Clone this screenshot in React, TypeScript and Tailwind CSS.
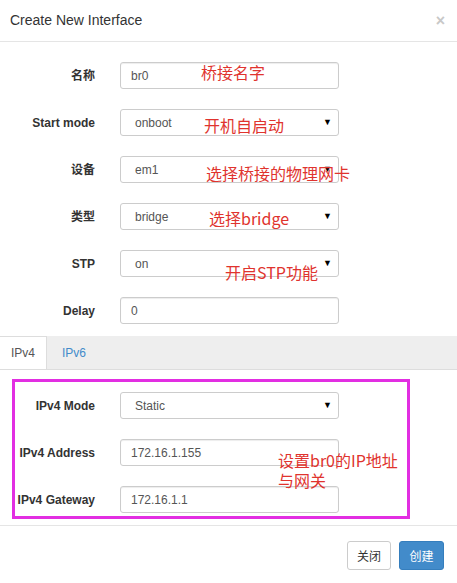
import React from "react";

const font = { fontFamily: '"Liberation Sans", Arial, "Noto Sans CJK SC", sans-serif' };

function Label({ children }: { children: React.ReactNode }) {
  return (
    <div className="w-[95px] text-right text-[12px] font-bold text-[#333]">{children}</div>
  );
}

function TextInput({ value }: { value: string }) {
  return (
    <div className="ml-[25px] flex h-[27px] w-[219px] items-center rounded-[3px] border border-[#ccc] bg-white pl-[10px] text-[12px] text-[#555] shadow-[inset_0_1px_1px_rgba(0,0,0,0.075)]">
      {value}
    </div>
  );
}

function SelectInput({ value }: { value: string }) {
  return (
    <div className="ml-[25px] flex h-[27px] w-[219px] items-center justify-between rounded-[3px] border border-[#ccc] bg-white pl-[14px] pr-[6px] text-[12px] text-[#555]">
      <span>{value}</span>
      <span className="text-[9px] text-black">▼</span>
    </div>
  );
}

function Row({ label, children, className = "" }: { label: string; children: React.ReactNode; className?: string }) {
  return (
    <div className={"flex items-center " + className}>
      <Label>{label}</Label>
      {children}
    </div>
  );
}

function Note({ children, className }: { children: React.ReactNode; className: string }) {
  return (
    <div
      className={"absolute text-[16px] leading-[20px] text-[#e0332e] " + className}
      style={{ fontFamily: '"Noto Sans CJK SC", "Liberation Sans", sans-serif' }}
    >
      {children}
    </div>
  );
}

export default function App() {
  return (
    <div className="relative h-[583px] w-[457px] overflow-hidden bg-white" style={font}>
      {/* header */}
      <div className="flex h-[42px] items-center justify-between border-b border-[#e5e5e5] pl-[10px] pr-[12px]">
        <div className="text-[14px] text-[#333]">Create New Interface</div>
        <div className="text-[16px] font-bold leading-none text-[#c8c8c8]">×</div>
      </div>

      {/* form */}
      <div className="flex flex-col gap-[20px] pt-[20px]">
        <Row label="名称"><TextInput value="br0" /></Row>
        <Row label="Start mode"><SelectInput value="onboot" /></Row>
        <Row label="设备"><SelectInput value="em1" /></Row>
        <Row label="类型"><SelectInput value="bridge" /></Row>
        <Row label="STP"><SelectInput value="on" /></Row>
        <Row label="Delay"><TextInput value="0" /></Row>
      </div>

      {/* tabs */}
      <div className="mt-[12px] flex h-[34px] border-b border-[#ddd] bg-[#eee]">
        <div className="flex w-[47px] items-center border-r border-t border-[#ddd] bg-white pl-[11px] text-[12px] text-[#555]">
          IPv4
        </div>
        <div className="flex items-center pl-[15px] text-[12px] text-[#428bca]">IPv6</div>
      </div>

      {/* highlighted section */}
      <div className="ml-[12px] mt-[9px] flex h-[140px] w-[398px] flex-col gap-[20px] border-[3px] border-[#e22ee2] pt-[10px]">
        <Row label="IPv4 Mode" className="-ml-[15px]"><SelectInput value="Static" /></Row>
        <Row label="IPv4 Address" className="-ml-[15px]"><TextInput value="172.16.1.155" /></Row>
        <Row label="IPv4 Gateway" className="-ml-[15px]"><TextInput value="172.16.1.1" /></Row>
      </div>

      {/* footer */}
      <div className="mt-[6px] flex justify-end gap-[8px] border-t border-[#e5e5e5] pr-[13px] pt-[15px]">
        <div
          className="flex h-[29px] w-[44px] items-center justify-center rounded-[3px] border border-[#ccc] bg-white text-[12px] text-[#333]"
          style={{ fontFamily: '"Noto Sans CJK SC", sans-serif' }}
        >
          关闭
        </div>
        <div
          className="flex h-[29px] w-[45px] items-center justify-center rounded-[3px] border border-[#357ebd] bg-[#428bca] text-[12px] text-white"
          style={{ fontFamily: '"Noto Sans CJK SC", sans-serif' }}
        >
          创建
        </div>
      </div>

      {/* annotations */}
      <Note className="left-[201px] top-[62px]">桥接名字</Note>
      <Note className="left-[204px] top-[115px]">开机自启动</Note>
      <Note className="left-[206px] top-[163px]">选择桥接的物理网卡</Note>
      <Note className="left-[209px] top-[208px]">选择bridge</Note>
      <Note className="left-[225px] top-[262px]">开启STP功能</Note>
      <Note className="left-[278px] top-[450px]">
        设置br0的IP地址
        <br />
        与网关
      </Note>
    </div>
  );
}
